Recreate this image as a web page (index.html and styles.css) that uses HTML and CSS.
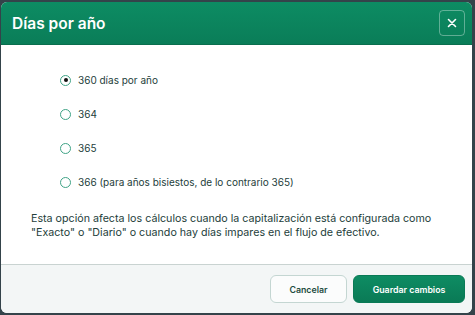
FILE: index.html
```html
<!DOCTYPE html>
<html lang="es">
<head>
    <meta charset="UTF-8">
    <meta name="viewport" content="width=device-width, initial-scale=1.0">
    <title>Días por año</title>
    <link rel="stylesheet" href="styles.css">
</head>
<body>

    <div class="modal">
        <div class="modal-header">
            <h1 class="modal-title">Días por año</h1>
            <button class="close-btn" aria-label="Cerrar">
                <svg width="12" height="12" viewBox="0 0 12 12">
                    <path d="M2.5 2.5 L9.5 9.5 M9.5 2.5 L2.5 9.5" stroke="#fff" stroke-width="1.6" stroke-linecap="round"/>
                </svg>
            </button>
        </div>

        <div class="modal-body">
            <div class="options">
                <label class="option">
                    <input type="radio" name="days" value="360" checked>
                    <span class="radio"></span>
                    360 días por año
                </label>
                <label class="option">
                    <input type="radio" name="days" value="364">
                    <span class="radio"></span>
                    364
                </label>
                <label class="option">
                    <input type="radio" name="days" value="365">
                    <span class="radio"></span>
                    365
                </label>
                <label class="option">
                    <input type="radio" name="days" value="366">
                    <span class="radio"></span>
                    366 (para años bisiestos, de lo contrario 365)
                </label>
            </div>
            <p class="note">Esta opción afecta los cálculos cuando la capitalización está configurada como "Exacto" o "Diario" o cuando hay días impares en el flujo de efectivo.</p>
        </div>

        <div class="modal-footer">
            <button class="btn btn-cancel">Cancelar</button>
            <button class="btn btn-save">Guardar cambios</button>
        </div>
    </div>

</body>
</html>
```

FILE: styles.css
```css
body {
    margin: 0;
    height: 315px;
    background-color: #34434a;
    font-family: Inter, "Noto Sans", sans-serif;
    overflow: hidden;
}

.modal {
    margin: 2px 3px 0 1px;
    height: 311px;
    background-color: #fff;
    border-radius: 6px;
    overflow: hidden;
    display: flex;
    flex-direction: column;
}

.modal-header {
    height: 43px;
    flex-shrink: 0;
    display: flex;
    align-items: center;
    justify-content: space-between;
    padding: 0 7px 0 11px;
    background: linear-gradient(180deg, #0d8c63 0%, #0a7d58 100%);
    border-bottom: 1px solid #0a6e4e;
    box-sizing: border-box;
}

.modal-title {
    margin: 0;
    color: #fff;
    font-size: 15.5px;
    font-weight: 600;
}

.close-btn {
    width: 26px;
    height: 26px;
    padding: 0;
    display: flex;
    align-items: center;
    justify-content: center;
    background: transparent;
    border: 1px solid rgba(255, 255, 255, 0.35);
    border-radius: 4px;
    cursor: pointer;
}

.modal-body {
    flex: 1;
    padding: 28px 20px 0 30px;
    border-bottom: 1px solid #c9d3d1;
}

.options {
    display: flex;
    flex-direction: column;
    gap: 20px;
    padding-left: 29px;
}

.option {
    display: flex;
    align-items: center;
    gap: 7px;
    height: 14px;
    font-size: 10px;
    color: #24403b;
    cursor: pointer;
}

.option input {
    display: none;
}

.radio {
    width: 9px;
    height: 9px;
    border: 1px solid #3fa386;
    border-radius: 50%;
    display: flex;
    align-items: center;
    justify-content: center;
}

.option input:checked + .radio::after {
    content: "";
    width: 4px;
    height: 4px;
    border-radius: 50%;
    background-color: #111;
}

.note {
    margin: 23px 0 0;
    font-size: 10.7px;
    line-height: 14px;
    color: #24403b;
}

.modal-footer {
    height: 48px;
    flex-shrink: 0;
    display: flex;
    align-items: center;
    justify-content: flex-end;
    gap: 6px;
    padding: 0 7px 0 0;
    background-color: #f3f6f6;
}

.btn {
    height: 28px;
    border-radius: 6px;
    font-family: Inter, "Noto Sans", sans-serif;
    font-size: 8.8px;
    font-weight: 600;
    cursor: pointer;
}

.btn-cancel {
    width: 77px;
    background-color: #fbfcfc;
    border: 1px solid #c4d6d2;
    color: #1f4d42;
}

.btn-save {
    width: 112px;
    background: linear-gradient(180deg, #0e8c63 0%, #0a7a56 100%);
    border: 1px solid #0a7a56;
    color: #fff;
}
```
